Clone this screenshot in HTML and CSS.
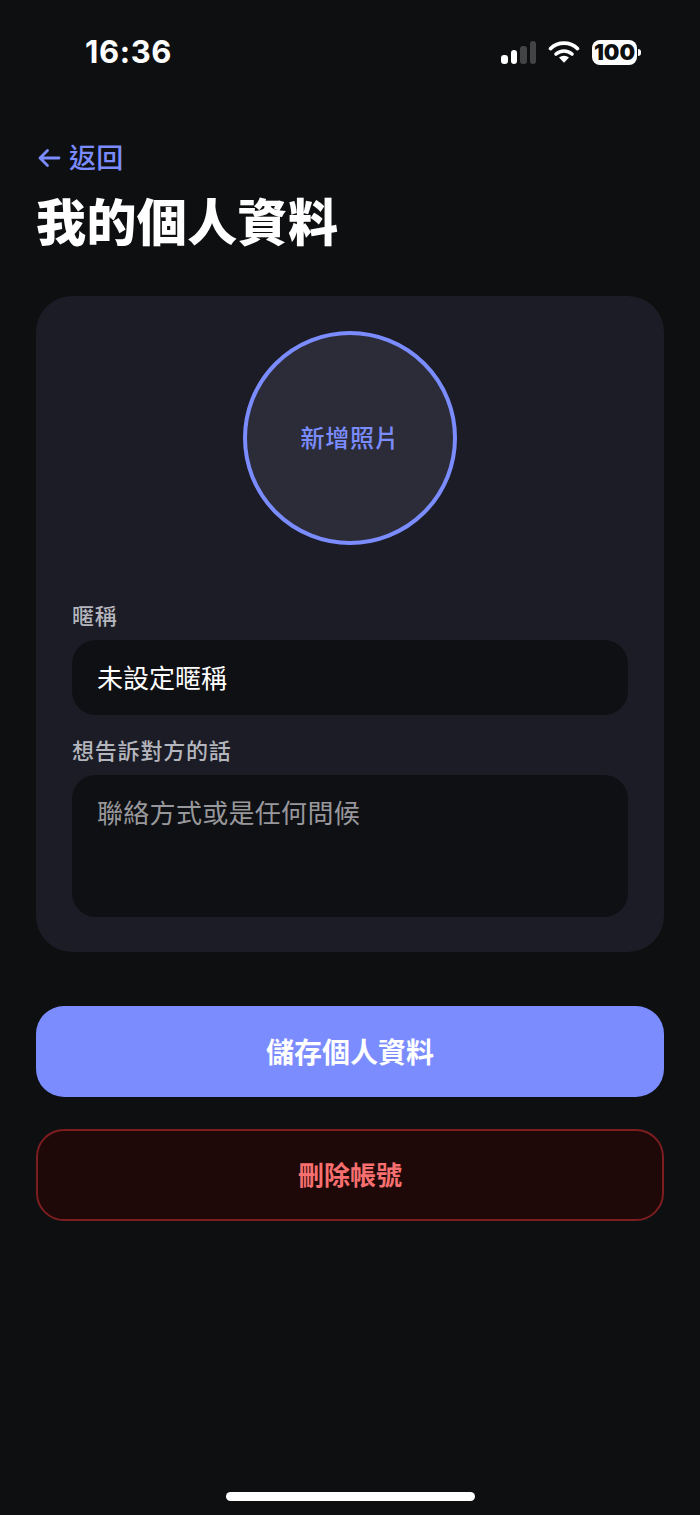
FILE: index.html
```html
<!DOCTYPE html>
<html lang="zh-Hant">
<head>
    <meta charset="UTF-8">
    <meta name="viewport" content="width=device-width, initial-scale=1.0">
    <title>我的個人資料</title>
    <link rel="stylesheet" href="styles.css">
</head>
<body>

    <div class="status-bar">
        <span class="time">16:36</span>
        <div class="status-icons">
            <div class="signal">
                <span class="bar on b1"></span>
                <span class="bar on b2"></span>
                <span class="bar b3"></span>
                <span class="bar b4"></span>
            </div>
            <svg class="wifi" width="32" height="24" viewBox="0 0 32 24">
                <path d="M2.5 8.6a19.5 19.5 0 0 1 27 0" fill="none" stroke="#fff" stroke-width="3.6" stroke-linecap="round"/>
                <path d="M8 14a12 12 0 0 1 16 0" fill="none" stroke="#fff" stroke-width="3.6" stroke-linecap="round"/>
                <path d="M11 17.6a7.4 7.4 0 0 1 10 0L16 22.8z" fill="#fff"/>
            </svg>
            <div class="battery">
                <span class="battery-level">100</span>
                <span class="battery-tip"></span>
            </div>
        </div>
    </div>

    <div class="page">
        <a class="back" href="#">
            <svg width="24" height="20" viewBox="0 0 24 20">
                <path d="M22 10H3M10.5 2.5 3 10l7.5 7.5" fill="none" stroke="#7b8cff" stroke-width="2.8" stroke-linecap="round" stroke-linejoin="round"/>
            </svg>
            <span class="back-text">返回</span>
        </a>
        <h1>我的個人資料</h1>

        <div class="card">
            <div class="avatar">新增照片</div>

            <label class="field-label label-name">暱稱</label>
            <input class="field" type="text" value="未設定暱稱">

            <label class="field-label label-note">想告訴對方的話</label>
            <textarea class="field note" placeholder="聯絡方式或是任何問候"></textarea>
        </div>

        <button class="btn save">儲存個人資料</button>
        <button class="btn delete">刪除帳號</button>
    </div>

    <div class="home-bar"></div>

</body>
</html>
```

FILE: styles.css
```css
* {
    margin: 0;
    padding: 0;
    box-sizing: border-box;
    font-family: Inter, "Noto Sans CJK TC", sans-serif;
}

body {
    background: #0e0f11;
    color: white;
    width: 700px;
    height: 1515px;
    overflow: hidden;
    position: relative;
}

/* status bar */
.status-bar {
    height: 104px;
    padding: 32px 59px 0 85px;
    display: flex;
    justify-content: space-between;
    align-items: flex-start;
}

.time {
    font-size: 31px;
    line-height: 40px;
    font-weight: 700;
    letter-spacing: 0.6px;
}

.status-icons {
    display: flex;
    align-items: center;
    height: 40px;
}

.signal {
    display: flex;
    align-items: flex-end;
    gap: 3px;
    height: 23px;
    margin-right: 12px;
}

.bar {
    width: 6.5px;
    border-radius: 3px;
    background: #434446;
}

.bar.on { background: white; }
.b1 { height: 9px; }
.b2 { height: 14px; }
.b3 { height: 18px; }
.b4 { height: 23px; }

.wifi { margin-right: 12px; }

.battery {
    display: flex;
    align-items: center;
}

.battery-level {
    width: 45px;
    height: 25px;
    background: white;
    color: #0e0f11;
    border-radius: 8px;
    font-size: 22px;
    line-height: 25px;
    font-weight: 900;
    text-align: center;
}

.battery-tip {
    width: 3px;
    height: 7px;
    margin-left: 1px;
    background: white;
    border-radius: 0 3px 3px 0;
}

/* page */
.page {
    padding: 0 36px;
}

.back {
    display: flex;
    align-items: center;
    gap: 8px;
    height: 40px;
    margin-top: 34px;
    margin-left: 1px;
    color: #7b8cff;
    font-size: 27px;
    font-weight: 500;
    text-decoration: none;
}

.back-text {
    padding-bottom: 4px;
    letter-spacing: 0.3px;
}

h1 {
    font-size: 50px;
    line-height: 68px;
    font-weight: 900;
    letter-spacing: 0.4px;
    margin-top: 11px;
}

.card {
    margin-top: 39px;
    height: 656px;
    padding: 35px 36px 36px;
    background: #1b1c26;
    border-radius: 36px;
}

.avatar {
    width: 214px;
    height: 214px;
    margin: 0 auto;
    padding-bottom: 4px;
    display: flex;
    align-items: center;
    justify-content: center;
    background: #2b2c38;
    border: 4px solid #7b8cff;
    border-radius: 50%;
    color: #7b8cff;
    font-size: 24px;
    font-weight: 500;
    letter-spacing: 0.7px;
}

.field-label {
    display: block;
    font-size: 22px;
    line-height: 30px;
    color: #b5b6bd;
    font-weight: 500;
    letter-spacing: 0.8px;
}

.label-name { margin-top: 56px; margin-bottom: 9px; }
.label-note { margin-top: 21px; margin-bottom: 9px; }

.field {
    display: block;
    width: 100%;
    height: 75px;
    padding: 0 25px 3px;
    background: #0f1013;
    border: none;
    border-radius: 24px;
    outline: none;
    color: white;
    font-size: 26px;
    font-weight: 400;
}

.note {
    height: 142px;
    padding: 21px 25px;
    resize: none;
    line-height: 36px;
    letter-spacing: 0.3px;
}

.note::placeholder {
    color: #98989c;
    opacity: 1;
}

.btn {
    display: block;
    width: 100%;
    border: none;
    border-radius: 28px;
    font-weight: 700;
    cursor: pointer;
}

.save {
    height: 91px;
    margin-top: 54px;
    padding-bottom: 2px;
    background: #7b8cff;
    color: white;
    font-size: 28px;
}

.delete {
    height: 92px;
    margin-top: 32px;
    padding-bottom: 4px;
    background: #1e0908;
    border: 2px solid #7c1d20;
    color: #f86f6f;
    font-size: 26px;
}

.home-bar {
    position: absolute;
    left: 226px;
    top: 1492px;
    width: 249px;
    height: 9px;
    background: white;
    border-radius: 5px;
}
```
